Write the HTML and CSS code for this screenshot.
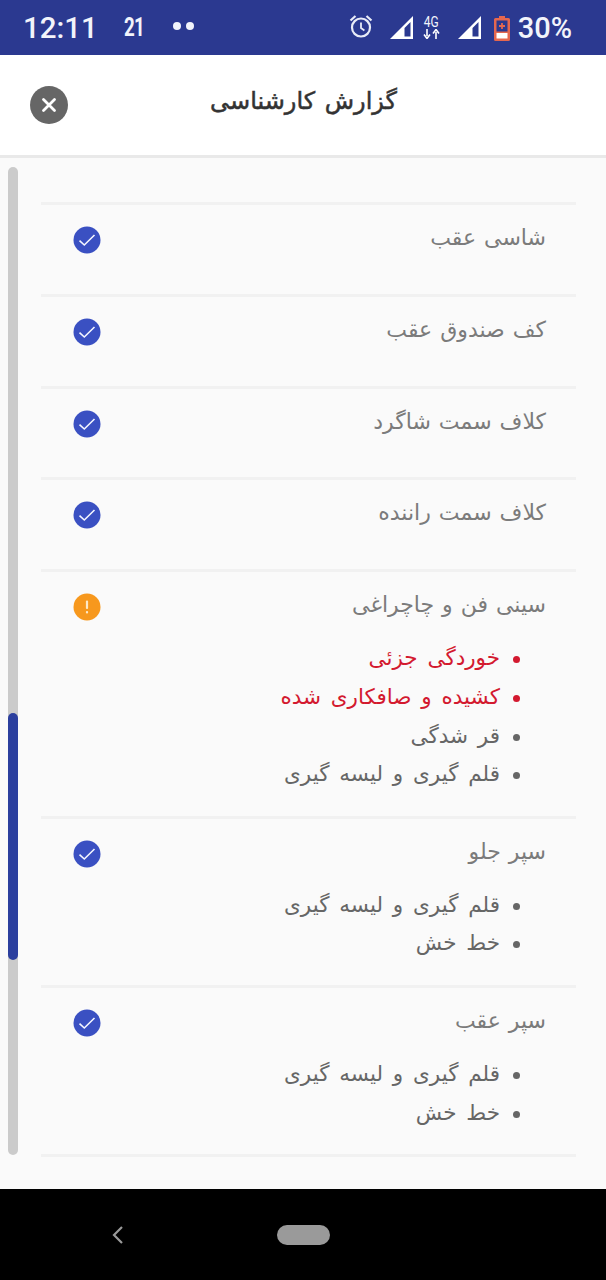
FILE: index.html
```html
<!DOCTYPE html>
<html lang="fa">
<head>
<meta charset="utf-8">
<title>گزارش کارشناسی</title>
<link rel="stylesheet" href="styles.css">
</head>
<body>
<svg class="defs" width="0" height="0" aria-hidden="true">
  <symbol id="ok" viewBox="0 0 28 28">
    <circle cx="14" cy="14" r="13.5" fill="#3a50c2"/>
    <path d="M6.500 14.600l4.800 4.400L21.500 9" fill="none" stroke="#f4f6ff" stroke-width="1.600"/>
  </symbol>
  <symbol id="warn" viewBox="0 0 28 28">
    <circle cx="14" cy="14" r="13.5" fill="#f7981d"/>
    <rect x="12.900" y="7.500" width="2.200" height="8.500" rx="1" fill="#fde9c8"/>
    <rect x="12.900" y="18" width="2.200" height="2.400" rx="1" fill="#fde9c8"/>
  </symbol>
</svg>
<div class="screen">
  <header class="status">
    <div class="status-left">
      <span class="clock">12:11</span>
      <span class="badge-num">21</span>
      <span class="dots"><i></i><i></i></span>
    </div>
    <div class="status-right">
      <svg class="alarm" width="26" height="26" viewBox="0 0 26 26"><circle cx="13" cy="14.500" r="9" fill="none" stroke="#e8ebf7" stroke-width="2.200"/><path d="M13 9.500v5.500l3.400 2.400" fill="none" stroke="#e8ebf7" stroke-width="1.800"/><path d="M2.500 7.500l5-4.500M23.500 7.500l-5-4.500" stroke="#e8ebf7" stroke-width="2.200"/></svg>
      <svg class="sig1" width="25" height="25" viewBox="0 0 25 25"><path d="M1 24L24 1v23zM21.500 21.500v-14.500l-6 6v8.500z" fill="#fff" fill-rule="evenodd"/></svg>
      <div class="net"><span class="net-label">4G</span><svg width="17" height="10" viewBox="0 0 17 10"><path d="M4 0v7M1 5.500l3 4 3-4M13 10V3M10 4.500l3-4 3 4" fill="none" stroke="#fff" stroke-width="1.600"/></svg></div>
      <svg class="sig2" width="25" height="25" viewBox="0 0 25 25"><path d="M1 24L24 1v23zM21.500 21.500v-14.500l-6 6v8.500z" fill="#fff" fill-rule="evenodd"/></svg>
      <svg class="batt" width="16" height="26" viewBox="0 0 16 26"><path d="M5 1h6v2h3.500a1.500 1.500 0 0 1 1.500 1.500v20a1.500 1.500 0 0 1-1.500 1.500h-13A1.500 1.500 0 0 1 0 24.500v-20A1.500 1.500 0 0 1 1.500 3H5z" fill="#e5674f"/><rect x="2.500" y="5.500" width="11" height="11" fill="#2b3990"/><rect x="2.500" y="18" width="11" height="5.500" fill="#fff"/><path d="M8 8v6M5 11h6" stroke="#e5674f" stroke-width="1.800"/></svg>
      <span class="percent">30%</span>
    </div>
  </header>

  <div class="titlebar">
    <button class="close" aria-label="بستن"><svg width="16" height="16" viewBox="0 0 16 16"><path d="M2.500 2.500l11 11M13.500 2.500l-11 11" stroke="#fff" stroke-width="2.800" stroke-linecap="round"/></svg></button>
    <h1 class="title">گزارش کارشناسی</h1>
  </div>

  <main class="content">
    <div class="track"><div class="thumb"></div></div>
    <section class="list">
      <article class="row">
        <div class="row-head"><h2 class="name">شاسی عقب</h2><svg class="icon"><use href="#ok"/></svg></div>
      </article>
      <article class="row">
        <div class="row-head"><h2 class="name">کف صندوق عقب</h2><svg class="icon"><use href="#ok"/></svg></div>
      </article>
      <article class="row">
        <div class="row-head"><h2 class="name">کلاف سمت شاگرد</h2><svg class="icon"><use href="#ok"/></svg></div>
      </article>
      <article class="row">
        <div class="row-head"><h2 class="name">کلاف سمت راننده</h2><svg class="icon"><use href="#ok"/></svg></div>
      </article>
      <article class="row has-items">
        <div class="row-head"><h2 class="name">سینی فن و چاچراغی</h2><svg class="icon"><use href="#warn"/></svg></div>
        <ul class="items">
          <li class="bad">خوردگی جزئی</li>
          <li class="bad">کشیده و صافکاری شده</li>
          <li>قر شدگی</li>
          <li>قلم گیری و لیسه گیری</li>
        </ul>
      </article>
      <article class="row has-items">
        <div class="row-head"><h2 class="name">سپر جلو</h2><svg class="icon"><use href="#ok"/></svg></div>
        <ul class="items">
          <li>قلم گیری و لیسه گیری</li>
          <li>خط خش</li>
        </ul>
      </article>
      <article class="row has-items">
        <div class="row-head"><h2 class="name">سپر عقب</h2><svg class="icon"><use href="#ok"/></svg></div>
        <ul class="items">
          <li>قلم گیری و لیسه گیری</li>
          <li>خط خش</li>
        </ul>
      </article>
    </section>
  </main>

  <nav class="navbar">
    <svg class="back" width="14" height="20" viewBox="0 0 14 20"><path d="M12 2L4 10l8 8" fill="none" stroke="#9a9a9a" stroke-width="2.200"/></svg>
    <span class="home"></span>
  </nav>
</div>
</body>
</html>
```

FILE: styles.css
```css
* { box-sizing: border-box; }
html, body { margin: 0; padding: 0; }
body { font-family: "DejaVu Sans", sans-serif; background: #000; }
.defs { position: absolute; }

.screen { width: 606px; height: 1280px; display: flex; flex-direction: column; overflow: hidden; }

.status {
  height: 55px; flex: none; background: #2b3990; color: #f2f4fb;
  display: flex; align-items: center; justify-content: space-between;
  padding: 0 34px 0 23px;
  font-family: Roboto, sans-serif;
}
.status-left { display: flex; align-items: center; }
.clock { font-size: 29.500px; font-weight: 500; width: 101px; }
.badge-num { font-size: 25px; font-weight: 700; width: 48px; letter-spacing: -1px; transform: scaleX(0.75); transform-origin: left; margin-top: -1px; }
.dots { display: flex; gap: 5px; margin-top: -3px; margin-left: 1px; }
.dots i { width: 8px; height: 8px; border-radius: 50%; background: #f2f4fb; display: block; }
.status-right { display: flex; align-items: center; }
.alarm { margin-right: 15px; margin-top: -3px; }
.sig1 { margin-top: -1px; }
.net { display: flex; flex-direction: column; align-items: center; width: 19px; margin: -1px 16px 0 8px; }
.net-label { font-size: 15px; line-height: 14px; font-weight: 400; transform: scaleX(.8); }
.net svg { display: block; }
.sig2 { margin-right: 12px; margin-top: -1px; }
.batt { margin-right: 8px; }
.percent { font-size: 29px; font-weight: 500; }

.titlebar {
  height: 103px; flex: none; background: #fff; border-bottom: 3px solid #e9e9e9;
  display: flex; align-items: center; padding: 0 0 3px 30px;
}
.close {
  width: 38px; height: 38px; border: 0; border-radius: 50%; background: #666;
  display: flex; align-items: center; justify-content: center; padding: 0;
  margin-top: 3px;
}
.title {
  margin: 0 0 6px 143px; font-size: 24px; font-weight: 400; word-spacing: 2px; color: #333; direction: rtl; width: 186px;
  white-space: nowrap; -webkit-text-stroke: 0.5px #333;
}

.content { height: 1031px; flex: none; background: #fafafa; position: relative; padding: 44px 30px 0 41px; }
.track { position: absolute; left: 8px; top: 9px; width: 10px; height: 988px; border-radius: 5px; background: #cbcbcb; }
.thumb { position: absolute; left: 0; top: 546px; width: 10px; height: 247px; border-radius: 5px; background: #2b3f9e; }

.list { display: flex; flex-direction: column; border-bottom: 3px solid #f1f1f1; }
.row { height: 91.750px; border-top: 3px solid #f1f1f1; padding: 0 30px 0 32px; }
.row.has-items { height: auto; padding-bottom: 21.500px; }
.row-head { display: flex; direction: rtl; justify-content: space-between; align-items: flex-start; padding-top: 18px; }
.name { margin: 0; font-size: 22px; line-height: 30px; font-weight: 400; word-spacing: 1px; color: #7b7b7b; }
.icon { width: 28px; height: 28px; display: block; margin-top: 3px; }
.has-items .row-head { padding-bottom: 18px; }

.items { margin: 0; padding: 0 46px 0 0; direction: rtl; list-style: none; }
.items li { font-size: 21.500px; line-height: 38.800px; word-spacing: 3px; color: #666; position: relative; }
.items li::before { content: ""; position: absolute; right: -20px; top: 17px; width: 7px; height: 7px; border-radius: 50%; background: #666; }
.items li.bad { color: #d3192f; }
.items li.bad::before { background: #d3192f; }

.navbar { flex: 1; background: #000; display: flex; align-items: center; padding: 0 0 0 110px; }
.back { margin-right: 153px; }
.home { width: 53px; height: 20px; border-radius: 10px; background: #9a9a9a; }
```
